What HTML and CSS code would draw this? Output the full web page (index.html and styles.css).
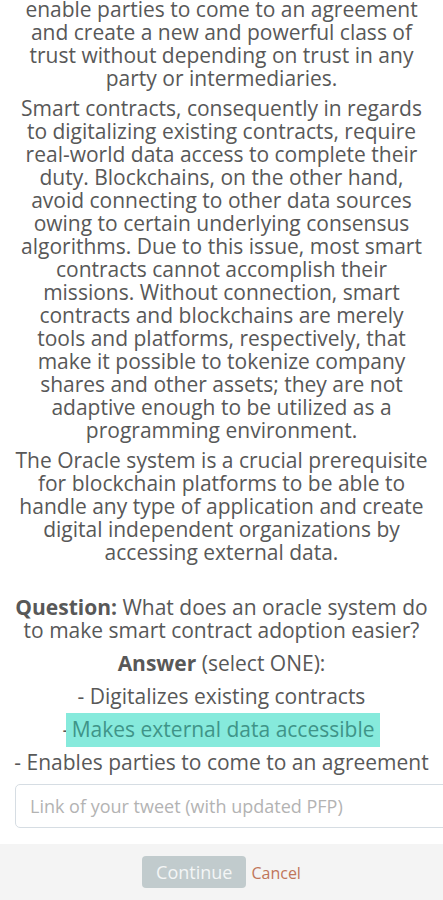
FILE: index.html
```html
<!DOCTYPE html>
<html lang="en">
<head>
    <meta charset="UTF-8">
    <meta name="viewport" content="width=device-width, initial-scale=1.0">
    <title>Oracle Quiz</title>
    <link rel="stylesheet" href="styles.css">
</head>
<body>
    <div class="modal">
        <div class="content">
            <p class="cut">enable parties to come to an agreement and create a new and powerful class of trust without depending on trust in any party or intermediaries.</p>
            <p>Smart contracts, consequently in regards to digitalizing existing contracts, require real-world data access to complete their duty. Blockchains, on the other hand, avoid connecting to other data sources owing to certain underlying consensus algorithms. Due to this issue, most smart contracts cannot accomplish their missions. Without connection, smart contracts and blockchains are merely tools and platforms, respectively, that make it possible to tokenize company shares and other assets; they are not adaptive enough to be utilized as a programming environment.</p>
            <p>The Oracle system is a crucial prerequisite for blockchain platforms to be able to handle any type of application and create digital independent organizations by accessing external data.</p>

            <div class="quiz">
                <p class="question"><b>Question:</b> What does an oracle system do to make smart contract adoption easier?</p>
                <p class="answer-title"><b>Answer</b> (select ONE):</p>
                <p class="option">- Digitalizes existing contracts</p>
                <p class="option">-<span class="marked"> Makes external data accessible</span></p>
                <p class="option">- Enables parties to come to an agreement</p>
            </div>

            <input type="text" class="tweet-input" placeholder="Link of your tweet (with updated PFP)">
        </div>
        <div class="footer">
            <button class="btn" disabled>Continue</button>
            <a class="cancel">Cancel</a>
        </div>
    </div>
</body>
</html>
```

FILE: styles.css
```css
body {
    margin: 0;
    background-color: #fff;
    font-family: "Open Sans", Arial, sans-serif;
    color: #585858;
    overflow: hidden;
}
.modal {
    width: 443px;
}
.content {
    padding: 0 14px 16px 14px;
    text-align: center;
    font-size: 21px;
    line-height: 23px;
}
.content p {
    margin: 0 0 7px 0;
}
.cut {
    margin-top: -2px !important;
}
.quiz {
    margin-top: 32px;
}
.question {
    margin-bottom: 10px !important;
}
.answer-title {
    margin-bottom: 10px !important;
}
.option {
    margin-bottom: 10px !important;
}
.marked {
    background-color: #86eadc;
    color: #3f9488;
    padding: 2px 6px 4px 0;
    margin-left: -3px;
}
.tweet-input {
    display: block;
    width: 450px;
    height: 44px;
    margin: 7px 0 0 1px;
    padding: 0 14px;
    box-sizing: border-box;
    border: 1px solid #d6dde3;
    border-radius: 5px;
    font-family: "Open Sans", Arial, sans-serif;
    font-size: 18px;
    color: #555;
}
.tweet-input::placeholder {
    color: #b3b3b3;
}
.footer {
    background-color: #f4f4f4;
    height: 56px;
    display: flex;
    justify-content: center;
    align-items: center;
    gap: 5px;
}
.btn {
    background-color: #c1cbcd;
    color: #f4f6f6;
    border: none;
    border-radius: 4px;
    padding: 0 14px;
    height: 32px;
    font-family: "Open Sans", Arial, sans-serif;
    font-size: 18px;
}
.cancel {
    color: #c0765a;
    font-size: 16px;
    margin-top: 2px;
}
```
